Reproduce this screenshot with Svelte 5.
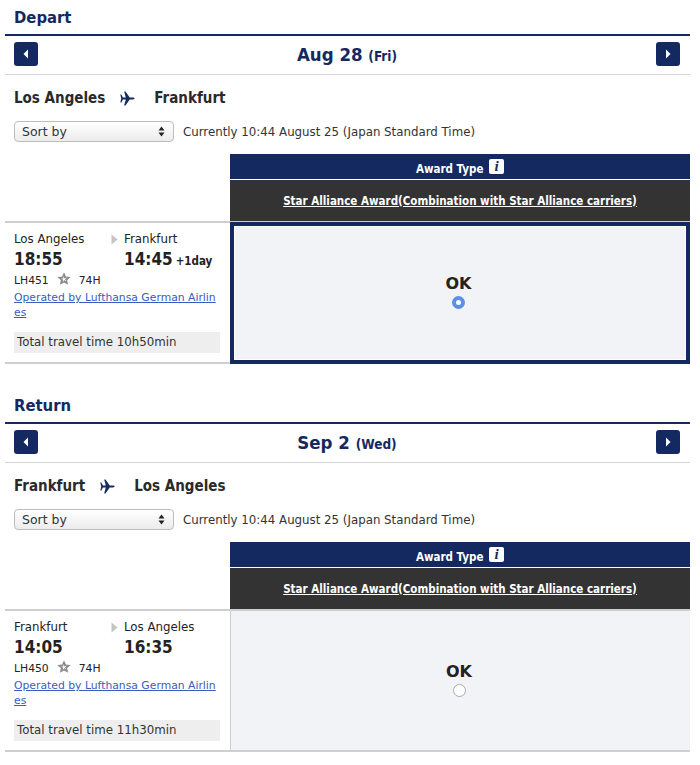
<script>
  const sections = [
    {
      title: 'Depart', date: 'Aug 28', day: '(Fri)', from: 'Los Angeles', to: 'Frankfurt',
      dep: '18:55', arr: '14:45', plus: '+1day', flight: 'LH451', total: '10h50min', selected: true
    },
    {
      title: 'Return', date: 'Sep 2', day: '(Wed)', from: 'Frankfurt', to: 'Los Angeles',
      dep: '14:05', arr: '16:35', plus: '', flight: 'LH450', total: '11h30min', selected: false
    }
  ];
  const blades = [0, 72, 144, 216, 288];
</script>

<div class="page">
  {#each sections as s}
    <section>
      <h2>{s.title}</h2>
      <div class="datebar">
        <button class="nav" aria-label="Previous day">
          <svg width="6" height="10" viewBox="0 0 6 10"><path d="M5 0.5V9.5L0.5 5Z" fill="#fff" /></svg>
        </button>
        <div class="date">{s.date} <small>{s.day}</small></div>
        <button class="nav" aria-label="Next day">
          <svg width="6" height="10" viewBox="0 0 6 10"><path d="M1 0.5V9.5L5.5 5Z" fill="#fff" /></svg>
        </button>
      </div>

      <div class="route">
        <span>{s.from}</span>
        <svg class="plane" width="15" height="15" viewBox="0 0 15 15">
          <path d="M0.3 3.6h1l1.6 3h2.9L4.2 0.6h1.3l4.2 6h3.1c1 0 1.8.4 1.8.9s-.8.9-1.8.9H9.7l-4.2 6H4.2l1.6-6H2.9l-1.6 3h-1l.9-3.9z" fill="#14295f" />
        </svg>
        <span>{s.to}</span>
      </div>

      <div class="sortrow">
        <div class="select">
          Sort by
          <svg width="7" height="11" viewBox="0 0 7 11"><path d="M3.5 0.5L6.5 4.5H0.5ZM3.5 10.5L0.5 6.5H6.5Z" fill="#222" /></svg>
        </div>
        <span>Currently 10:44 August 25 (Japan Standard Time)</span>
      </div>

      <div class="award-head">
        <div class="award-type">
          Award Type <span class="info">i</span>
        </div>
        <div class="award-name"><a href="#award">Star Alliance Award(Combination with Star Alliance carriers)</a></div>
      </div>

      <div class="flight">
        <div class="details">
          <div class="cities">
            <span class="c1">{s.from}</span>
            <svg class="tri" width="7" height="11" viewBox="0 0 7 11"><path d="M0.5 0.5L6.5 5.5L0.5 10.5Z" fill="#c4c4c4" /></svg>
            <span>{s.to}</span>
          </div>
          <div class="times">
            <span class="c1">{s.dep}</span>
            <span class="tri-gap"></span>
            <span>{s.arr}</span>
            {#if s.plus}<small>{s.plus}</small>{/if}
          </div>
          <div class="flightno">
            <span>{s.flight}</span>
            <svg width="14" height="14" viewBox="0 0 14 14">
              {#each blades as r}
                <path d="M7 0.2L9.4 5.6L7.4 6.4L6.6 4.4L4.6 5.6Z" fill="#8c8c8c" transform="rotate({r} 7 7.2)" />
              {/each}
            </svg>
            <span>74H</span>
          </div>
          <a class="operated" href="#op">Operated by Lufthansa German Airlines</a>
          <div class="total">Total travel time {s.total}</div>
        </div>
        <div class="choice" class:selected={s.selected}>
          <div class="ok">OK</div>
          <span class="radio" class:on={s.selected}></span>
        </div>
      </div>
    </section>
  {/each}
</div>

<style>
  :global(body) {
    margin: 0;
    background: #fff;
  }
  .page {
    width: 700px;
    height: 765px;
    overflow: hidden;
    padding: 0 10px 0 5px;
    box-sizing: border-box;
    font-family: "DejaVu Sans", sans-serif;
    font-size: 11.8px;
    color: #222;
  }
  section {
    margin-bottom: 24px;
  }
  h2 {
    margin: 0;
    height: 36px;
    box-sizing: border-box;
    padding: 8px 0 0 9px;
    font-family: "DejaVu Sans Condensed", "DejaVu Sans", sans-serif;
    font-size: 16.5px;
    line-height: 20px;
    font-weight: bold;
    color: #14295f;
    border-bottom: 2px solid #14295f;
  }
  .datebar {
    display: flex;
    align-items: center;
    justify-content: space-between;
    height: 39px;
    box-sizing: border-box;
    padding: 0 10px 2px 9px;
    border-bottom: 1px solid #d4d4d4;
  }
  .nav {
    width: 24px;
    height: 24px;
    padding: 0;
    border: 0;
    border-radius: 3px;
    background: #14295f;
    display: flex;
    align-items: center;
    justify-content: center;
  }
  .date {
    font-family: "DejaVu Sans Condensed", "DejaVu Sans", sans-serif;
    font-size: 18.5px;
    font-weight: bold;
    color: #14295f;
  }
  .date small {
    font-size: 13.5px;
  }
  .route {
    display: flex;
    align-items: center;
    height: 46px;
    padding-left: 9px;
    box-sizing: border-box;
    font-family: "DejaVu Sans Condensed", "DejaVu Sans", sans-serif;
    font-size: 15px;
    font-weight: bold;
    color: #2a2a2a;
  }
  .plane {
    margin: 0 19px 0 15px;
  }
  .sortrow {
    display: flex;
    align-items: center;
    gap: 9px;
    height: 21px;
    padding-left: 9px;
    color: #333;
  }
  .select {
    width: 160px;
    height: 21px;
    box-sizing: border-box;
    display: flex;
    align-items: center;
    justify-content: space-between;
    padding: 0 8px 1px 7px;
    background: linear-gradient(#fff, #ececec);
    border: 1px solid #bdbdbd;
    border-radius: 4px;
    font-size: 12.5px;
  }
  .award-head {
    margin: 12px 0 0 225px;
    color: #fff;
    text-align: center;
    font-family: "DejaVu Sans Condensed", "DejaVu Sans", sans-serif;
    font-weight: bold;
    font-size: 11.5px;
  }
  .award-type {
    height: 25px;
    line-height: 30px;
    background: #14295f;
  }
  .info {
    display: inline-block;
    width: 15px;
    height: 15px;
    margin-left: 2px;
    line-height: 15px;
    border-radius: 2px;
    background: #fff;
    color: #14295f;
    font-family: "Liberation Serif", serif;
    font-weight: bold;
    font-style: italic;
    font-size: 15px;
    vertical-align: 2px;
  }
  .award-name {
    height: 41px;
    line-height: 42px;
    margin-top: 1px;
    background: #333;
  }
  .award-name a {
    color: #fff;
  }
  .flight {
    display: flex;
    height: 143px;
    border-top: 2px solid #cfcfcf;
    border-bottom: 2px solid #cfcfcf;
    box-sizing: border-box;
  }
  .details {
    flex: none;
    width: 225px;
    padding: 8px 9px 0 9px;
    box-sizing: border-box;
  }
  .cities {
    display: flex;
    align-items: center;
    height: 16px;
  }
  .c1 {
    width: 97px;
    flex: none;
  }
  .tri {
    margin-right: 6px;
  }
  .times {
    display: flex;
    align-items: baseline;
    height: 24px;
    font-family: "DejaVu Sans Condensed", "DejaVu Sans", sans-serif;
    font-size: 17px;
    font-weight: bold;
    line-height: 24px;
    color: #222;
  }
  .tri-gap {
    width: 13px;
  }
  .times small {
    font-size: 11.5px;
    margin-left: 3px;
  }
  .flightno {
    display: flex;
    align-items: center;
    gap: 8px;
    height: 18px;
    font-size: 10.8px;
  }
  .flightno svg {
    margin-bottom: 2px;
  }
  .operated {
    display: block;
    width: 204px;
    margin-top: 1px;
    line-height: 15px;
    font-size: 10.8px;
    color: #3c5bc0;
    word-break: break-all;
  }
  .total {
    margin-top: 12px;
    width: 206px;
    height: 21px;
    line-height: 21px;
    padding-left: 3px;
    box-sizing: border-box;
    background: #eee;
    color: #333;
  }
  .choice {
    flex: 1;
    background: #f2f3f7;
    border-left: 1px solid #ccc;
    display: flex;
    flex-direction: column;
    align-items: center;
    justify-content: center;
    box-sizing: border-box;
    padding: 0 3px 3px 0;
  }
  .choice.selected {
    border: 4px solid #14295f;
    outline: 1px solid #fff;
    outline-offset: -5px;
    margin: -1px 0 -2px;
  }
  .ok {
    font-size: 16px;
    font-weight: bold;
    line-height: 20px;
    color: #222;
  }
  .radio {
    width: 13px;
    height: 13px;
    margin-top: 2px;
    box-sizing: border-box;
    border-radius: 50%;
    background: #fff;
    border: 1px solid #aaa;
  }
  .radio.on {
    border: 4px solid #5b8fe8;
  }
</style>
